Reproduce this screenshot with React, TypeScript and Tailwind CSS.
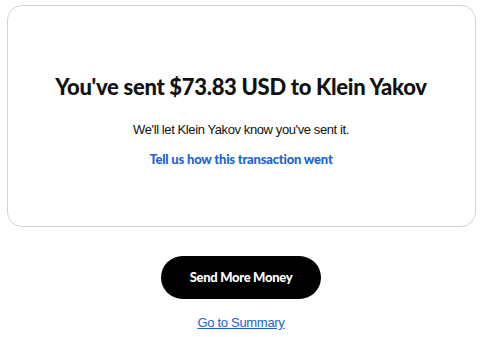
export default function App() {
  return (
    <div className="w-[482px] h-[337px] bg-white flex flex-col items-center pt-[5px] px-[6px] font-['Liberation_Sans',Arial,sans-serif]">
      <div className="w-[469px] h-[222px] border border-[#d4d4d4] rounded-[15px] flex flex-col items-center pt-[66px]">
        <h1 className="text-[22px] leading-[30px] font-black text-[#111] tracking-[-0.3px] font-['Lato',sans-serif]">
          You've sent $73.83 USD to Klein Yakov
        </h1>
        <p className="mt-[20px] text-[13px] leading-[16px] text-[#111] tracking-[-0.4px]">
          We'll let Klein Yakov know you've sent it.
        </p>
        <a className="mt-[12px] text-[13px] leading-[18px] font-black text-[#1a64d3] tracking-[-0.2px] font-['Lato',sans-serif]">
          Tell us how this transaction went
        </a>
      </div>
      <button className="mt-[29px] w-[160px] h-[43px] rounded-full bg-black text-white text-[13px] font-black tracking-[-0.3px] font-['Lato',sans-serif]">
        Send More Money
      </button>
      <a className="mt-[16px] text-[13px] leading-[16px] text-[#1a64d3] underline tracking-[-0.3px]">
        Go to Summary
      </a>
    </div>
  );
}
